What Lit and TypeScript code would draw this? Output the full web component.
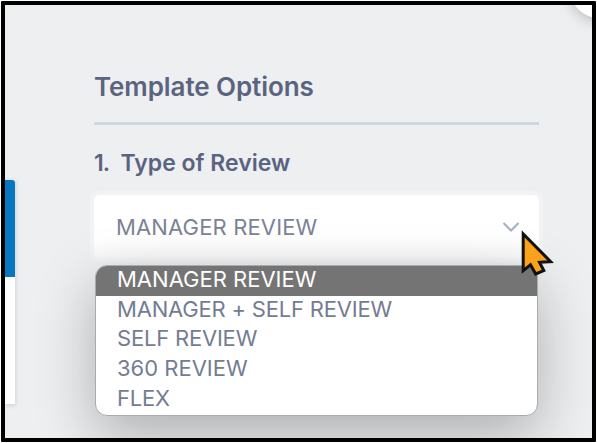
import { LitElement, html, css } from "lit";
import { customElement, state } from "lit/decorators.js";

@customElement("app-root")
export class AppRoot extends LitElement {
  @state() private selected = "MANAGER REVIEW";

  private options = [
    { label: "MANAGER REVIEW", cls: "manager" },
    { label: "MANAGER + SELF REVIEW", cls: "both" },
    { label: "SELF REVIEW", cls: "self" },
    { label: "360 REVIEW", cls: "full" },
    { label: "FLEX", cls: "flex" },
  ];

  static styles = css`
    :host {
      display: block;
      box-sizing: border-box;
      width: 597px;
      height: 443px;
      padding: 1px;
      background: #fff;
      font-family: Inter, "Liberation Sans", sans-serif;
    }
    * { box-sizing: border-box; }
    .frame {
      position: relative;
      width: 595px;
      height: 441px;
      border: 4px solid #000;
      border-radius: 1px;
      background: #eeeff1;
      overflow: hidden;
      display: flex;
    }
    .card {
      flex: none;
      position: relative;
      z-index: 1;
      width: 9.5px;
      height: 224px;
      margin-top: 175px;
      background: linear-gradient(#0777c0 97.5px, #fff 97.5px);
      border-top-right-radius: 3px;
      box-shadow: 0 1px 5px rgba(60, 70, 90, 0.22);
    }
    .round {
      position: absolute;
      left: 565px;
      top: -45px;
      width: 58px;
      height: 58px;
      border-radius: 50%;
      background: #fff;
      box-shadow: 0 3px 14px rgba(0, 0, 0, 0.22);
    }
    .panel {
      width: 445px;
      margin-left: 79.5px;
      padding-top: 66px;
      color: #5a6380;
    }
    h1, h2 { margin: 0; white-space: nowrap; font-weight: 600; }
    h1 {
      height: 51px;
      font-size: 26px;
      line-height: 32px;
      letter-spacing: -0.08px;
    }
    hr {
      margin: 0;
      height: 3px;
      border: 0;
      background: #cfd7e2;
    }
    h2 {
      display: flex;
      margin-top: 23px;
      height: 47px;
      font-size: 23px;
      line-height: 30px;
      letter-spacing: 0;
    }
    .number { width: 26.5px; letter-spacing: -1px; }
    .select {
      display: flex;
      align-items: center;
      justify-content: space-between;
      height: 63px;
      padding: 0 19px 0 22px;
      border-radius: 5px;
      background: linear-gradient(#fff 70%, #f8f8f9);
      box-shadow: 0 0 0 4px #f2f3f5;
      color: #7b8496;
    }
    .label { font-size: 22px; white-space: nowrap; letter-spacing: -0.2px; }
    .select .label { letter-spacing: 0.14px; }
    .chevron { width: 18px; height: 12px; }
    .menu {
      position: relative;
      margin: 7px 1px 0;
      height: 151px;
      padding: 0;
      border: 1px solid #aaabad;
      border-radius: 12px;
      background: #fff;
      box-shadow: 0 20px 58px rgba(0, 0, 0, 0.27);
      list-style: none;
      color: #737d92;
    }
    .option {
      height: 29.7px;
      padding-left: 21px;
      line-height: 26px;
    }
    .option.active {
      border-radius: 11px 11px 0 0;
      background: #747474;
      color: #fff;
    }
    .option .manager { letter-spacing: 0; }
    .option .full { letter-spacing: 0; }
    .cursor {
      position: absolute;
      left: 515px;
      top: 222px;
      width: 40px;
      height: 52px;
    }
  `;

  render() {
    return html`
      <div class="frame">
        <div class="card"></div>
        <div class="panel">
          <h1>Template Options</h1>
          <hr />
          <h2><span class="number">1.</span><span>Type of Review</span></h2>
          <div class="select">
            <span class="label">${this.selected}</span>
            <svg class="chevron" viewBox="0 0 18 12" fill="none" stroke="#a5afbd" stroke-width="2">
              <path d="M1.5 2 L9 9.5 L16.5 2" />
            </svg>
          </div>
          <ul class="menu">
            ${this.options.map(
              (o) => html`<li class="option ${o.label === this.selected ? "active" : ""}">
                <span class="label ${o.cls}">${o.label}</span>
              </li>`
            )}
          </ul>
        </div>
        <div class="round"></div>
        <svg class="cursor" viewBox="0 0 40 52">
          <path d="M3.2 7 V43.6 L10.5 37.8 L15.7 47 L23.8 43.6 L19.5 35.3 L30.6 34.6 Z"
            fill="#faa21b" stroke="#111" stroke-width="3" />
        </svg>
      </div>
    `;
  }
}
